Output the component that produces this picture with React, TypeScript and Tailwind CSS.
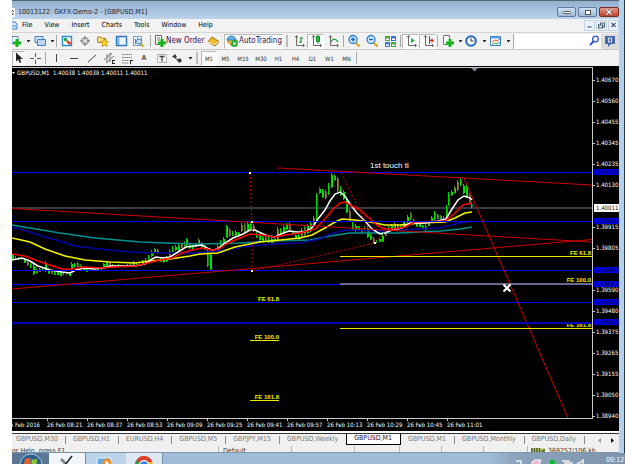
import type { ReactNode } from 'react'

const MENU = ['File', 'View', 'Insert', 'Charts', 'Tools', 'Window', 'Help']
const TIMEFRAMES = ['M1', 'M5', 'M15', 'M30', 'H1', 'H4', 'D1', 'W1', 'MN']
const TABS = [
  'GBPUSD,M30',
  'GBPUSD,H1',
  'EURUSD,H4',
  'GBPUSD,M5',
  'GBPJPY,M15',
  'GBPUSD,Weekly',
  'GBPUSD,M1',
  'GBPUSD,M1',
  'GBPUSD,Monthly',
  'GBPUSD,Daily',
]
const ACTIVE_TAB = 6

const TIMES = [
  '26 Feb 08:21',
  '26 Feb 08:37',
  '26 Feb 08:53',
  '26 Feb 09:09',
  '26 Feb 09:25',
  '26 Feb 09:41',
  '26 Feb 09:57',
  '26 Feb 10:13',
  '26 Feb 10:29',
  '26 Feb 10:45',
  '26 Feb 11:01',
]

const PRICES: [number, string][] = [
  [80, '1.40670'],
  [101, '1.40560'],
  [122, '1.40455'],
  [143, '1.40345'],
  [164, '1.40235'],
  [185, '1.40130'],
  [227, '1.39915'],
  [248, '1.39805'],
  [290, '1.39590'],
  [311, '1.39480'],
  [332, '1.39375'],
  [353, '1.39265'],
  [374, '1.39155'],
  [395, '1.39050'],
  [416, '1.38940'],
]

const LEVELS: [number, string][] = [
  [172, '1.40191'],
  [221, '1.39942'],
  [270, '1.39687'],
  [284, '1.39617'],
  [302, '1.39524'],
  [322, '1.39418'],
]

// x, high, low
const BARS = `12 254 259,15 256 259,18 257 260,21 257 260,24 258 263,27 260 266,30 263 268,33 264 275,36 268 274,39 268 272,42 267 270,45 261 272,48 268 274,51 270 274,54 271 275,57 270 275,60 271 276,63 272 275,66 273 275,69 272 276,71 262 270,74 263 267,77 262 267,80 264 270,83 266 270,86 268 272,89 269 271,92 269 271,95 269 271,98 268 270,101 268 270,103 263 267,106 262 266,109 262 267,112 264 267,115 265 267,118 264 267,121 265 267,124 265 267,127 264 266,130 263 266,133 261 265,136 262 265,139 261 264,142 260 264,145 258 264,148 255 260,151 250 257,154 248 253,157 249 254,160 257 262,163 257 263,166 256 262,169 249 258,172 246 253,175 245 251,178 244 251,181 243 248,184 241 247,186 238 246,189 243 249,192 245 250,195 243 247,198 238 244,201 242 248,204 245 250,207 250 267,210 253 270,213 250 252,217 244 252,220 240 248,223 237 244,226 225 238,229 228 237,232 231 236,235 230 236,238 232 236,241 223 232,244 223 233,247 222 232,250 222 230,253 224 232,256 232 238,259 234 241,262 236 242,265 236 242,268 237 243,271 238 243,274 238 242,277 227 242,280 228 234,283 225 233,286 223 230,289 222 231,292 230 235,295 234 238,298 234 240,301 228 237,304 225 236,307 224 234,310 222 232,313 216 224,316 193 222,319 187 194,322 189 198,325 190 199,328 183 195,331 173 188,334 174 181,337 177 192,340 186 196,343 190 200,346 198 213,349 209 222,352 222 230,355 224 232,358 226 231,361 228 233,364 226 232,367 226 238,370 232 240,373 237 243,376 240 243,379 238 242,382 234 242,385 231 236,388 226 232,391 224 231,394 222 231,397 224 229,400 224 228,403 221 226,407 215 223,410 212 220,413 219 224,416 221 227,419 222 227,422 225 229,425 224 231,428 221 226,431 216 222,434 211 220,437 214 219,440 215 219,443 216 219,446 205 218,448 192 206,451 190 196,454 186 194,457 180 191,460 178 186,463 184 194,466 184 198,469 193 205,471 202 208`
  .split(',')
  .map((b) => b.split(' ').map(Number))

const AVERAGES = [
  {
    color: '#009090',
    points: '12,225 30,228 60,233 95,238 140,242 165,243 200,244 240,243 270,241 310,240 330,236 350,233 400,233 440,231 460,229 472,227',
  },
  {
    color: '#0000a8',
    points: '12,227 30,232 45,237 60,241 75,246 100,249 130,252 165,253 195,253 205,252 225,250 250,246 275,244 300,243 320,239 330,234 345,230 380,231 400,230 440,228 455,224 472,221',
  },
  {
    color: '#f4f400',
    points: '12,238 30,242 45,249 65,256 85,260 110,262 135,263 150,261 170,259 190,256 200,254 218,253 235,247 260,242 280,240 300,238 312,235 325,228 335,222 342,219 355,220 370,222 385,225 400,225 420,223 445,222 455,218 465,213 472,212',
  },
  {
    color: '#ffffff',
    points: '12,260 22,258 30,261 38,266 50,270 62,272 70,273 76,270 84,268 95,269 103,268 110,266 122,266 135,266 145,264 152,259 156,257 163,258 170,257 178,252 186,247 194,246 202,245 207,248 212,250 218,249 225,243 233,238 243,234 250,230 255,230 261,233 268,236 275,237 281,234 289,231 297,232 305,232 312,228 318,219 325,210 330,201 335,194 340,192 345,196 350,204 357,213 365,221 372,229 380,234 385,233 392,230 402,228 410,223 425,223 437,221 446,219 452,209 458,200 464,196 470,198 472,200',
  },
  {
    color: '#ff0000',
    points: '12,254 25,256 38,261 50,265 62,269 72,269 85,267 100,268 115,267 135,266 148,263 160,260 172,258 182,253 192,250 202,248 212,250 219,249 228,243 240,238 250,234 262,235 275,237 285,235 300,233 315,229 325,219 333,209 340,203 345,202 350,205 360,210 370,219 378,226 385,229 395,229 405,227 415,222 445,221 455,213 463,205 472,203',
  },
]

const FIBS = [
  { label: 'FE 61.8', x: 279, y: 301 },
  { label: 'FE 100.0', x: 279, y: 339 },
  { label: 'FE 161.8', x: 279, y: 399 },
  { label: 'FE 61.8', x: 591, y: 255 },
  { label: 'FE 100.0', x: 591, y: 282 },
  { label: 'FE 161.8', x: 591, y: 327 },
]

function Icon({ children, w = 14 }: { children: ReactNode; w?: number }) {
  return (
    <svg width={w} height="14" viewBox={`0 0 ${w} 14`} fill="none" aria-hidden="true" className="shrink-0">
      {children}
    </svg>
  )
}

function Tool({
  label,
  className = 'w-[18px]',
  pressed = false,
  drop = false,
  children,
}: {
  label: string
  className?: string
  pressed?: boolean
  drop?: boolean
  children: ReactNode
}) {
  return (
    <button
      type="button"
      aria-label={label}
      className={`flex h-[15px] shrink-0 items-center justify-center ${
        pressed ? 'border border-[#b8b8b8] border-r-white border-b-white bg-[#fafafa]' : ''
      } ${className}`}
    >
      {children}
      {drop && (
        <svg width="5" height="3" viewBox="0 0 5 3" className="ml-1 shrink-0" aria-hidden="true">
          <path d="M0.5 0h4L2.5 2.5z" fill="#222" />
        </svg>
      )}
    </button>
  )
}

const Separator = () => <span className="mx-px h-3 w-px shrink-0 bg-[#a8a8a8]" />
const Grip = () => <span className="mx-[3px] h-3 w-0.5 shrink-0 border-x border-[#bdbdbd] bg-white" />

const Axes = () => <path d="M4.500 2v9.500H12M3 3.500l1.500-2L6 3.500M11 10l1.500 1.500L11 13" stroke="#6a6a6a" />
const Plus = () => <path d="M6 9h8M10 5v8" stroke="#12b51a" strokeWidth="3" />

function Lens({ sign }: { sign: string }) {
  return (
    <Icon>
      <path d="M8.500 8.500l4.200 4" stroke="#d9a820" strokeWidth="2.400" />
      <circle cx="6" cy="5.500" r="4" fill="#d4ebff" stroke="#2f7fc9" strokeWidth="1.300" />
      <path d={sign} stroke="#1f63b5" strokeWidth="1.400" />
    </Icon>
  )
}

function TitleBar() {
  return (
    <header className="flex h-[19px] items-center justify-between border-t border-[#5b6470] bg-linear-to-b from-[#92b0d2] to-[#bcd3ea]">
      <div className="mt-1 flex items-center gap-[3px]">
        <svg width="3" height="9" viewBox="0 0 3 9" aria-hidden="true">
          <rect width="3" height="9" fill="#fff" />
          <path d="M0 2l1.500 2M0 7l1.500-2" stroke="#222" />
        </svg>
        <h1 className="text-[7px] leading-none whitespace-nowrap text-[#1b2433]">10013122: GKFX-Demo-2 - [GBPUSD,M1]</h1>
      </div>
      <div className="mt-1 flex gap-0.5">
        <button type="button" aria-label="Minimize" className="flex h-[10px] w-[19px] items-center justify-center rounded-xs border border-[#5f7a9c] bg-linear-to-b from-[#cfe0f1] to-[#9db9d8]">
          <span className="h-[3px] w-2 rounded-xs border border-[#555] bg-white" />
        </button>
        <button type="button" aria-label="Restore" className="flex h-[10px] w-[19px] items-center justify-center rounded-xs border border-[#5f7a9c] bg-linear-to-b from-[#cfe0f1] to-[#9db9d8]">
          <span className="h-[5px] w-[6px] border border-[#555] bg-white" />
        </button>
        <button type="button" aria-label="Close" className="flex h-[10px] w-5 items-center justify-center rounded-xs border border-[#7a2b22] bg-linear-to-b from-[#e39a8b] to-[#bf4129]">
          <svg width="8" height="6" viewBox="0 0 8 6" aria-hidden="true">
            <path d="M1.500.5l5 5M6.500.5l-5 5" stroke="#444" strokeWidth="2.400" />
            <path d="M1.500.5l5 5M6.500.5l-5 5" stroke="#fff" strokeWidth="1.400" />
          </svg>
        </button>
      </div>
    </header>
  )
}

function MenuBar() {
  return (
    <nav aria-label="Main menu" className="flex h-[13px] items-center bg-[#f2f2f2]">
      <svg width="6" height="9" viewBox="0 0 6 9" aria-hidden="true">
        <path d="M0 1h3l2 2v5H0" fill="#dcebfb" stroke="#3f7fd0" />
        <path d="M0 5h4" stroke="#3f7fd0" />
      </svg>
      <ul className="flex flex-1 gap-3 pl-1">
        {MENU.map((item) => (
          <li key={item} className="flex">
            <button type="button" className="text-[7px] leading-none">
              {item}
            </button>
          </li>
        ))}
      </ul>
      <div className="flex gap-px">
        {['M1 5h4', 'M2 3V1h4v4H4M0 3h4v3H0z', 'M1 1l4 4M5 1L1 5'].map((d, i) => (
          <button
            key={d}
            type="button"
            aria-label={['Minimize chart', 'Restore chart', 'Close chart'][i]}
            className="flex h-[11px] w-[11px] items-center justify-center border border-[#c3d3e4] bg-[#eaf2fb]"
          >
            <svg width="7" height="7" viewBox="-0.500 0 7 7" fill="none" aria-hidden="true">
              <path d={d} stroke="#4a5b70" strokeWidth="1.200" />
            </svg>
          </button>
        ))}
      </div>
    </nav>
  )
}

function MainToolbar() {
  return (
    <div role="toolbar" aria-label="Standard" className="flex h-[17px] items-center border-t border-[#d4d4d4] bg-[#f2f2f2]">
      <Tool label="New chart" className="w-[19px]" drop>
        <Icon w={10}>
          <path d="M0 2.500h6v7H0z" fill="#fff" stroke="#4d86b8" />
          <path d="M1 9h8M5 5v8" stroke="#12b51a" strokeWidth="3" />
        </Icon>
      </Tool>
      <Tool label="Profiles" className="ml-[3px] w-[21px]" drop>
        <Icon w={12}>
          <path d="M1 2.500h8v6H1z" fill="#d6e9fb" stroke="#4680b8" />
          <path d="M3.500 5.500h8v6h-8z" fill="#b9d5ef" stroke="#4680b8" />
        </Icon>
      </Tool>
      <Separator />
      <Tool label="Market watch">
        <Icon>
          <path d="M2.500 2.500h9v9h-9z" fill="#fff" stroke="#2f8cd0" strokeWidth="1.400" />
          <path d="M4 4h3v3H4z" fill="#25a844" />
          <path d="M7 7l3.500 3" stroke="#e23a22" strokeWidth="2.400" />
        </Icon>
      </Tool>
      <Tool label="Data window">
        <Icon>
          <circle cx="7" cy="7" r="3.400" stroke="#777" />
          <path d="M7 2v4M7 8v4M2 7h4M8 7h4" stroke="#777" strokeWidth="1.200" />
        </Icon>
      </Tool>
      <Tool label="Navigator">
        <Icon>
          <path d="M1.500 3h4l1 1.500H10v4H1.500z" fill="#f6dc83" stroke="#b68b20" />
          <path d="M8.500 5l1.300 2.400 2.700.4-2 1.900.5 2.800-2.500-1.300L6 12.500l.500-2.800-2-1.900 2.700-.4z" fill="#ffd52e" stroke="#c18a12" strokeWidth=".8" />
        </Icon>
      </Tool>
      <Tool label="Terminal" className="w-[17px]">
        <Icon>
          <path d="M2.500 2.500h10v9h-10z" fill="#eef6ff" stroke="#2f78c0" strokeWidth="1.400" />
          <path d="M3 3h2.500v8H3z" fill="#83b6e6" />
        </Icon>
      </Tool>
      <Tool label="Strategy tester">
        <Icon>
          <path d="M2.500 2.500h8v9h-8z" fill="#e6f0fa" stroke="#6fa0cc" />
          <path d="M4.500 5v5M6.500 4v4" stroke="#777" />
          <path d="M9.500 9.500l3 3" stroke="#d9a820" strokeWidth="2" />
          <circle cx="8" cy="7.500" r="2.500" fill="#cfe6fa" stroke="#3d83c4" />
        </Icon>
      </Tool>
      <span className="w-0.5" />
      <Separator />
      <button type="button" className="flex h-[15px] w-[52px] shrink-0 items-center text-[8px] whitespace-nowrap text-[#3b1350]">
        <Icon>
          <path d="M3.500 1.500h6v9h-6z" fill="#fff" stroke="#666" />
          <path d="M5 4h3M5 6h3" stroke="#777" />
          <Plus />
        </Icon>
        New Order
      </button>
      <Tool label="MetaEditor">
        <Icon>
          <path d="M2 8l4-5 7 4.500-4 4.500z" fill="#f0b92c" stroke="#a36b10" />
          <path d="M2 8l7 2.500 3.500-3" stroke="#fff2b8" />
        </Icon>
      </Tool>
      <button
        type="button"
        className="ml-0.5 flex h-[15px] shrink-0 items-center gap-px border border-[#b8b8b8] border-r-white border-b-white bg-[#fafafa] text-[8px] text-[#3b1350]"
      >
        <Icon w={13}>
          <path d="M2 7l5-2 6 2-6 5z" fill="#eec33c" stroke="#b48313" />
          <path d="M2 6a4.500 4 0 0 1 9 0z" fill="#65b2df" stroke="#3584b4" />
          <circle cx="9.500" cy="9.500" r="3.400" fill="#20ad32" />
          <path d="M8.500 7.700v3.600l3-1.800z" fill="#fff" />
        </Icon>
        AutoTrading
      </button>
      <Grip />
      <Tool label="Bar chart" className="w-4">
        <Icon>
          <Axes />
          <path d="M9 3v6M9 4h2M7 8h2" stroke="#159a2b" strokeWidth="1.200" />
        </Icon>
      </Tool>
      <Tool label="Candlesticks" className="w-[17px]" pressed>
        <Icon>
          <Axes />
          <path d="M9 1v9" stroke="#159a2b" />
          <path d="M7.500 2.500h3v5h-3z" fill="#20c63a" stroke="#128524" />
        </Icon>
      </Tool>
      <Tool label="Line chart">
        <Icon>
          <Axes />
          <path d="M5 8q3-6 7 0" stroke="#159a2b" strokeWidth="1.200" />
        </Icon>
      </Tool>
      <Separator />
      <Tool label="Zoom in">
        <Lens sign="M4 5.500h4M6 3.500v4" />
      </Tool>
      <Tool label="Zoom out">
        <Lens sign="M4 5.500h4" />
      </Tool>
      <Tool label="Tile windows">
        <Icon>
          <path d="M2 2h5v5H2zM8 8h5v5H8z" fill="#4aa835" />
          <path d="M8 2h5v5H8zM2 8h5v5H2z" fill="#3677d0" />
          <path d="M3 4.500h3v1.500H3zM9 4.500h3v1.500H9zM3 10.500h3V12H3zM9 10.500h3V12H9z" fill="#fff" />
        </Icon>
      </Tool>
      <Separator />
      <Tool label="Auto scroll" className="w-[17px]" pressed>
        <Icon>
          <Axes />
          <path d="M7 4v5l4-2.500z" fill="#20b436" />
        </Icon>
      </Tool>
      <Tool label="Chart shift" className="w-[17px]" pressed>
        <Icon>
          <Axes />
          <path d="M8.500 2v8" stroke="#555" />
          <path d="M9 6.500h4M11 4.500v4" stroke="#d63b22" strokeWidth="1.300" />
        </Icon>
      </Tool>
      <Separator />
      <Tool label="Indicators" className="w-6" drop>
        <Icon>
          <path d="M3.500 1.500h6v9h-6z" fill="#fff" stroke="#777" />
          <Plus />
        </Icon>
      </Tool>
      <Tool label="Periods" className="w-6" drop>
        <Icon>
          <circle cx="7" cy="7" r="4.800" fill="#fff" stroke="#1c68c4" strokeWidth="2" />
          <path d="M7 4v3h2.500" stroke="#333" />
        </Icon>
      </Tool>
      <Tool label="Templates" className="w-6" drop>
        <Icon>
          <path d="M2.500 2.500h10v9h-10z" fill="#fff" stroke="#3c80c8" />
          <path d="M3 3.500h9" stroke="#5b9be0" strokeWidth="2" />
          <path d="M4 8l3-2 2 1 3-2" stroke="#d84b3a" />
          <path d="M4 10.500l3-1.500 2 1 3-2" stroke="#28a043" />
        </Icon>
      </Tool>
      <label className="ml-0.5 flex h-[15px] min-w-0 flex-1 items-center border-l border-[#a8a8a8] bg-white">
        <span className="sr-only">Search</span>
        <input type="search" className="min-w-0 flex-1 text-[7px] outline-none" />
        <Icon>
          <path d="M3 11l4-4" stroke="#2a56c8" strokeWidth="2" />
          <circle cx="8.500" cy="5" r="2.800" stroke="#2a56c8" strokeWidth="1.300" />
        </Icon>
      </label>
      <Tool label="Chat" className="w-[18px] bg-[#dcdcdc]">
        <Icon>
          <path d="M2 2h10v8H8l-3 3v-3H2z" fill="#4a69a8" />
          <path d="M5.500 4h3v4h-3z" stroke="#dfe8f7" />
        </Icon>
      </Tool>
    </div>
  )
}

function LineToolbar() {
  return (
    <div role="toolbar" aria-label="Line studies and periods" className="flex h-[17px] items-center border-t border-[#c8c8c8] bg-[#f2f2f2] text-[6px] text-[#333]">
      <Tool label="Cursor" className="w-[13px]" pressed>
        <Icon w={9}>
          <path d="M2 1.500v9l2.200-2 1.500 3.500 1.600-.8L5.900 8H9z" fill="#222" />
        </Icon>
      </Tool>
      <Tool label="Crosshair" className="w-[19px]">
        <Icon>
          <path d="M7.500 2v4M7.500 9v4M2 7.500h4M9 7.500h4" stroke="#555" />
        </Icon>
      </Tool>
      <Separator />
      <Tool label="Vertical line">
        <Icon>
          <path d="M7.500 3v8" stroke="#444" />
        </Icon>
      </Tool>
      <Tool label="Horizontal line">
        <Icon>
          <path d="M3 7.500h8" stroke="#444" />
        </Icon>
      </Tool>
      <Tool label="Trendline" className="w-[17px]">
        <Icon>
          <path d="M3 11l8-7" stroke="#444" />
        </Icon>
      </Tool>
      <Tool label="Channel">
        <Icon>
          <path d="M2 9l8-7M4 12l8-7M5 3v8M8 2v9" stroke="#777" />
          <path d="M10 9.500h3M10 12.500h3M10.500 9v4" stroke="#222" />
        </Icon>
      </Tool>
      <Tool label="Fibonacci retracement" className="w-[17px]">
        <Icon>
          <path d="M2 3.500h10M2 6.500h10M2 9.500h7M2 12h7" stroke="#777" strokeDasharray="1.500 .7" />
          <path d="M10.500 9v4M10 9.500h3" stroke="#222" />
        </Icon>
      </Tool>
      <Tool label="Text">
        <span className="text-[7px] font-bold text-[#555]">A</span>
      </Tool>
      <Tool label="Text label" className="w-[17px]">
        <Icon>
          <path d="M2.500 3.500h9v8h-9z" stroke="#777" strokeDasharray="1 1" />
          <path d="M4.500 5.500h5M7 5v5.500" stroke="#444" strokeWidth="1.300" />
        </Icon>
      </Tool>
      <Tool label="Arrows" className="w-[23px]" drop>
        <Icon>
          <path d="M2 6l3-3 2 3-2 1zM7 9l3-2 2 3-3 2z" fill="#333" />
          <path d="M4 6l5 4" stroke="#333" />
        </Icon>
      </Tool>
      <Grip />
      {TIMEFRAMES.map((tf) => (
        <button
          key={tf}
          type="button"
          aria-pressed={tf === 'M1'}
          className={`h-[15px] shrink-0 ${
            tf === 'M1'
              ? 'w-4 border border-[#b8b8b8] border-r-white border-b-white bg-[#fafafa]'
              : tf.length > 2
                ? 'w-[18px]'
                : 'w-[17px]'
          }`}
        >
          {tf}
        </button>
      ))}
      <Separator />
    </div>
  )
}

function PriceChart() {
  return (
    <svg className="min-w-0 flex-1 border-t border-[#c8c8c8]" role="img" aria-label="GBPUSD one minute chart">
      <g transform="translate(-12 -68)" fill="none">
        <path d="M12 208h3000" stroke="#343b45" strokeWidth="2" />
        <g shapeRendering="crispEdges">
          {BARS.map(([x, high, low], i) => {
            const tall = low - high > 5
            return (
              <g key={x}>
                <path d={`M${x + 0.5} ${high}V${low}`} stroke={i % 5 === 3 ? '#3f8a1c' : '#00d400'} />
                {low - high > 3 && (
                  <path
                    d={`M${x + 1.5} ${high + (tall ? 2 : 1)}V${low - (tall ? 1 : 0)}`}
                    stroke={i % 4 === 1 ? '#7a6a18' : i % 4 === 2 ? '#0a8a0a' : '#00f000'}
                  />
                )}
              </g>
            )
          })}
        </g>
        {AVERAGES.map((avg) => (
          <polyline key={avg.color} points={avg.points} stroke={avg.color} strokeWidth="1.500" />
        ))}
        <g stroke="#0000ff" shapeRendering="crispEdges">
          {LEVELS.map(([y]) => (
            <path key={y} d={`M12 ${y + 0.5}h3000`} />
          ))}
        </g>
        <g stroke="#cc0000">
          <path d="M12 208.500L592 242M12 289L592 239.500M278 168L592 185M464 178L568 418" />
          <path d="M250 173L252 222L252 271L375 243L341 172M375 243L384 233" strokeDasharray="2 2" />
        </g>
        <path d="M340 256.500h252M340 328.500h252M250 340.500h29M250 400.500h29" stroke="#e8e800" shapeRendering="crispEdges" />
        <path d="M340 284h252" stroke="#8c8a96" strokeWidth="1.500" />
        <g fill="#fff">
          <path d="M249 172h2v2h-2zM251 221h2v2h-2zM251 270h2v2h-2zM374 242h2v2h-2z" />
          <path d="M471 68h7l-3.500 3.500z" fill="#7a8796" />
        </g>
        <path d="M503.500 284.500l7 7M510.500 284.500l-7 7" stroke="#fff" strokeWidth="2.200" />
        <g fill="#f0f000" fontSize="6" textAnchor="end" fontWeight="bold" className="font-['Liberation_Sans',sans-serif]">
          {FIBS.map((fib) => (
            <text key={`${fib.x}-${fib.y}`} x={fib.x} y={fib.y}>
              {fib.label}
            </text>
          ))}
        </g>
        <path d="M12 323h3000" stroke="#0000b8" strokeWidth="2" />
        <path d="M12 72h3l-1.500 2z" fill="#fff" />
        <text x="17" y="75" fill="#fff" fontSize="6" className="whitespace-pre">
          {'GBPUSD,M1  1.40038 1.40039 1.40011 1.40011'}
        </text>
        <text x="370" y="168" fill="#fff" fontSize="8" className="font-['Liberation_Sans',sans-serif]">
          1st touch tl
        </text>
      </g>
    </svg>
  )
}

function PriceAxis() {
  return (
    <svg className="w-[27px] shrink-0 border-l border-[#c8c8c8]" role="img" aria-label="Price scale">
      <g transform="translate(0 -67)" fontSize="6">
        {PRICES.map(([y, price]) => (
          <g key={price}>
            <path d={`M0 ${y + 0.5}h2`} stroke="#c8c8c8" />
            <text x="3" y={y + 2} fill="#fff">
              {price}
            </text>
          </g>
        ))}
        {LEVELS.map(([y, price]) => (
          <g key={price}>
            <rect x="1" y={y - 3} width="25" height="6" fill="#0000e0" />
            <text x="3" y={y + 2} fill="#000050">
              {price}
            </text>
          </g>
        ))}
        <rect x="1" y="204" width="25" height="8" fill="#fff" />
        <text x="3" y="210" fill="#111">
          1.40011
        </text>
      </g>
    </svg>
  )
}

function TimeAxis() {
  return (
    <div className="flex h-[13px] shrink-0 overflow-hidden bg-black text-[6px] leading-[11px] text-white">
      <ol className="mr-[26px] flex min-w-0 flex-1 border-t border-[#c8c8c8] whitespace-nowrap">
        <li className="flex w-[35px] shrink-0 justify-end overflow-hidden pr-[7px]">26 Feb 2016</li>
        {TIMES.map((time) => (
          <li key={time} className="w-10 shrink-0">
            <span className="block h-0.5 w-px bg-[#c8c8c8]" />
            <span className="block leading-[7px]">{time}</span>
          </li>
        ))}
      </ol>
    </div>
  )
}

function ChartTabs() {
  return (
    <div className="flex h-[15px] shrink-0 items-stretch border-t-2 border-white bg-[#f0f0f0] text-[7px] text-[#777]">
      <div role="tablist" aria-label="Charts" className="flex min-w-0 flex-1 overflow-hidden border-t border-[#333] pb-px">
        {TABS.map((tab, i) => (
          <button
            key={i}
            type="button"
            role="tab"
            aria-selected={i === ACTIVE_TAB}
            className={
              i === ACTIVE_TAB
                ? '-mt-px shrink-0 border-x border-b border-black bg-white pr-2 pl-[7px] text-[#2b0a3a]'
                : 'flex shrink-0 items-center'
            }
          >
            {i === ACTIVE_TAB ? (
              tab
            ) : (
              <>
                <span className={i === 0 ? 'pr-[7px] pl-1' : 'pr-2 pl-[7px]'}>{tab}</span>
                {i !== ACTIVE_TAB - 1 && <span className="h-2 w-px bg-[#888]" />}
              </>
            )}
          </button>
        ))}
      </div>
      <div className="flex w-[26px] items-center justify-around border-t border-[#333]">
        <button type="button" aria-label="Scroll tabs left">
          <svg width="4" height="5" viewBox="0 0 4 5" aria-hidden="true">
            <path d="M3 0v5L0 2.500z" fill="#999" />
          </svg>
        </button>
        <button type="button" aria-label="Scroll tabs right">
          <svg width="4" height="5" viewBox="0 0 4 5" aria-hidden="true">
            <path d="M0 0v5l3-2.500z" fill="#111" />
          </svg>
        </button>
      </div>
    </div>
  )
}

function StatusBar() {
  return (
    <footer className="flex h-[7px] shrink-0 overflow-hidden border-b border-[#7e97ad] bg-[#f0f0f0] text-[7px] leading-[8px] whitespace-nowrap text-[#333]">
      <span className="min-w-0 flex-1 pt-px">or Help, press F1</span>
      <span className="w-[73px] border-l border-[#bbb] pt-px pl-1">Default</span>
      {[63, 45, 42, 42, 44].map((w, i) => (
        <span key={i} style={{ width: w }} className="border-l border-[#bbb]" />
      ))}
      <span className="flex w-[92px] border-l border-[#bbb] pl-[3px]">
        <svg width="14" height="7" viewBox="0 0 14 7" aria-hidden="true">
          <path d="M0 2h14v5H0z" fill="#cfe08a" />
          <path d="M1 2v5M3.500 2v5M6 2v5M8.500 2v5M11 4v3M13 3v4" stroke="#3d4a14" strokeWidth="1.400" />
        </svg>
        <span className="pt-px pl-[3px]">368252/106 kb</span>
      </span>
    </footer>
  )
}

function Taskbar() {
  return (
    <div className="flex h-[11px] shrink-0 items-stretch overflow-hidden bg-linear-to-r from-[#9fbcd9] from-78% via-[#8da2bb] via-82% to-[#7e92ab]">
      <button type="button" aria-label="Start" className="flex w-[37px] justify-center bg-[#5c7796]">
        <svg width="24" height="11" viewBox="0 0 24 11" aria-hidden="true">
          <circle cx="12" cy="12" r="11" fill="#2c5e8c" stroke="#a8cbe4" />
          <path d="M6 6q3-2 5.500 0v5H5z" fill="#e2602d" />
          <path d="M12.500 6q3 1.500 6-.5l-1 5.500h-5z" fill="#8cc63f" />
        </svg>
      </button>
      <button type="button" aria-label="MetaTrader" className="flex w-[37px] justify-center border-r border-[#6f8dad] bg-[#f1f5f9]">
        <svg width="20" height="11" viewBox="0 0 20 11" fill="none" aria-hidden="true">
          <path d="M4 6l5 5" stroke="#888" strokeWidth="3" />
          <path d="M15 3L8 12" stroke="#222" strokeWidth="1.500" />
        </svg>
      </button>
      <button type="button" aria-label="Media player" className="flex w-10 justify-center bg-[#bcd2e8]">
        <svg width="20" height="11" viewBox="0 0 20 11" aria-hidden="true">
          <path d="M1 5h14v8H1z" fill="#62a9df" stroke="#e9f4fc" />
          <circle cx="11" cy="10" r="4.500" fill="#f08a24" />
          <path d="M9.500 7.500v5l4-2.500z" fill="#fff" />
        </svg>
      </button>
      <button type="button" aria-label="Chrome" className="flex w-[37px] justify-center border-r border-[#6f8dad] bg-[#dde8f2]">
        <svg width="20" height="11" viewBox="0 0 20 11" aria-hidden="true">
          <circle cx="10" cy="12" r="9" fill="#f0c020" />
          <path d="M1 12a9 9 0 0 1 17.500-3H10z" fill="#de3c2e" />
          <path d="M1 12a9 9 0 0 1 1.500-5l5 6z" fill="#2fa04c" />
          <circle cx="10" cy="12" r="4.400" fill="#3e83ec" stroke="#fff" strokeWidth="1.300" />
        </svg>
      </button>
      <span className="flex-1" />
      <svg width="84" height="11" viewBox="0 0 84 11" fill="none" aria-hidden="true">
        <path d="M2 8h5v5" stroke="#eee" strokeWidth="1.500" />
        <path d="M18 9l3-2h6l-2 5h-7z" fill="#efb6d8" stroke="#fff" />
        <path d="M36 7h5v4h-5z" fill="#12b83a" />
        <path d="M48 8h8M50 10h9M63 10h3l3-3v5" stroke="#f2f2f2" strokeWidth="1.300" />
      </svg>
      <time className="ml-2 w-[19px] shrink-0 text-[7px] leading-[15px] text-white">09:12</time>
    </div>
  )
}

export default function App() {
  return (
    <div className="flex h-screen flex-col overflow-hidden bg-white pl-3 font-['DejaVu_Sans_Condensed','DejaVu_Sans',sans-serif]">
      <div className="flex min-h-0 flex-1 flex-col border-r border-[#123f55] bg-[#b5d0ea] pr-[5px]">
        <TitleBar />
        <MenuBar />
        <MainToolbar />
        <LineToolbar />
        <main className="flex min-h-0 flex-1 flex-col">
          <div className="flex min-h-0 flex-1 bg-black pt-px">
            <PriceChart />
            <PriceAxis />
          </div>
          <TimeAxis />
        </main>
        <ChartTabs />
        <StatusBar />
      </div>
      <Taskbar />
    </div>
  )
}
